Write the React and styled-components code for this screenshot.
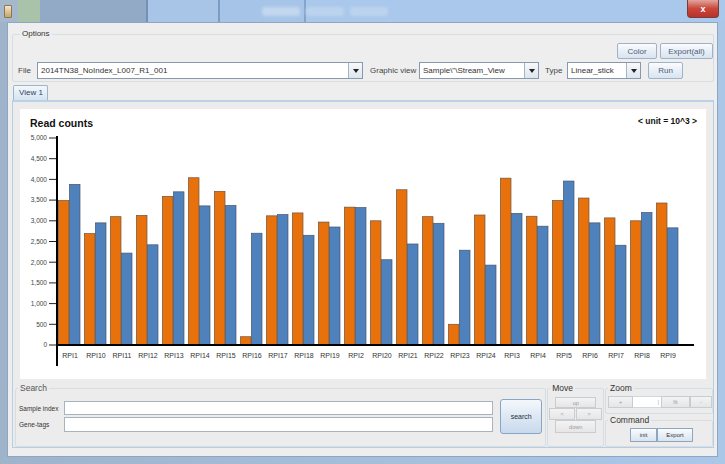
import React from 'react';
import styled, { createGlobalStyle } from 'styled-components';

const GlobalStyle = createGlobalStyle`
  html, body { margin: 0; padding: 0; }
  body {
    width: 725px;
    height: 464px;
    overflow: hidden;
    font-family: "Liberation Sans", Arial, sans-serif;
  }
`;

const Window = styled.div`
  width: 725px;
  height: 464px;
  box-sizing: border-box;
  display: flex;
  flex-direction: column;
  padding: 0 7px 7px 7px;
  background: linear-gradient(90deg, #9fb4cb 0%, #a3bcd8 40%, #abc7e8 100%);
`;

const TitleBar = styled.div`
  height: 22px;
  margin: 0 -7px;
  padding: 0 6px 0 4px;
  display: flex;
  align-items: center;
  justify-content: space-between;
  background: linear-gradient(90deg,
    #a5b8cc 0 18px, #a9c3aa 18px 40px, #93aac6 40px 146px,
    #7390b6 146px 148px, #a8c5e7 148px 218px, #7d9cc4 218px 220px,
    #a6c4e8 220px 304px, #86a4ca 304px 306px, #aac8ec 306px);
`;

const AppIcon = styled.div`
  width: 6px;
  height: 11px;
  border-radius: 1px;
  background: linear-gradient(#f3e7c9, #c9a46a);
  border: 1px solid #8d7653;
`;

const TitleBlobs = styled.div`
  flex: 1;
  display: flex;
  gap: 6px;
  padding-left: 250px;
`;

const Blob = styled.div`
  width: ${(p) => p.w}px;
  height: 9px;
  border-radius: 3px;
  background: ${(p) => p.c};
  filter: blur(1.5px);
`;

const CloseBtn = styled.div`
  width: 30px;
  height: 17px;
  margin-top: -4px;
  border-radius: 0 0 4px 4px;
  border: 1px solid #7a3a36;
  border-top: none;
  background: linear-gradient(#e2a59c, #c9473b 50%, #b8332a);
  color: #fff;
  font-size: 9px;
  font-weight: bold;
  display: flex;
  align-items: center;
  justify-content: center;
`;

const Client = styled.div`
  flex: 1;
  display: flex;
  flex-direction: column;
  padding: 6px 3px 0 4px;
  background: #eeeeee;
  border: 1px solid #8ea6c2;
  min-height: 0;
`;

const Group = styled.fieldset`
  margin: 0;
  padding: ${(p) => p.pad || '0'};
  border: 1px solid #d6dde3;
  border-radius: 2px;
  min-width: 0;
  box-sizing: border-box;
`;

const Legend = styled.legend`
  padding: 0 2px;
  margin-left: ${(p) => p.ml || 2}px;
  font-size: ${(p) => p.fs || 8}px;
  line-height: 10px;
  color: ${(p) => p.c || '#333'};
`;

const ButtonRow = styled.div`
  display: flex;
  justify-content: flex-end;
  gap: 3px;
  margin-top: 4px;
`;

const ControlRow = styled.div`
  display: flex;
  align-items: center;
  margin-top: 3px;
  height: 17px;
`;

const FieldLabel = styled.span`
  width: ${(p) => p.w}px;
  flex: none;
  font-size: 8px;
  color: #444;
`;

const Combo = styled.div`
  width: ${(p) => p.w}px;
  height: 17px;
  flex: none;
  box-sizing: border-box;
  display: flex;
  border: 1px solid #8899ad;
  background: #fff;
  margin-right: ${(p) => p.mr || 0}px;
`;

const ComboText = styled.span`
  flex: 1;
  padding-left: 3px;
  font-size: 8px;
  line-height: 15px;
  color: #333;
  white-space: nowrap;
  overflow: hidden;
`;

const ComboArrow = styled.span`
  width: 13px;
  border-left: 1px solid #a5b4c4;
  background: linear-gradient(#f7f9fc, #dde6ef);
  display: flex;
  align-items: center;
  justify-content: center;
  &::after {
    content: '';
    border-left: 3px solid transparent;
    border-right: 3px solid transparent;
    border-top: 4px solid #222;
  }
`;

const Btn = styled.button`
  width: ${(p) => p.w}px;
  height: ${(p) => p.h || 16}px;
  flex: none;
  padding: 0;
  box-sizing: border-box;
  border: 1px solid #9fb2c7;
  border-radius: 2px;
  background: linear-gradient(#fbfcfe, #e8eff7 50%, #d9e4f1);
  font-family: "Liberation Sans", Arial, sans-serif;
  font-size: 8px;
  color: #4d6078;
`;

const TabStrip = styled.div`
  display: flex;
  margin-top: 3px;
  padding-left: 1px;
`;

const Tab = styled.div`
  width: 35px;
  height: 15px;
  box-sizing: border-box;
  border: 1px solid #9db4cc;
  border-bottom: none;
  border-radius: 2px 2px 0 0;
  background: linear-gradient(#f2f7fc, #d6e4f2);
  font-size: 8px;
  color: #2f4460;
  padding-left: 5px;
  line-height: 14px;
`;

const TabPanel = styled.div`
  flex: 1;
  margin-bottom: 8px;
  display: flex;
  flex-direction: column;
  border: 1px solid #b8cde2;
  border-top: 2px solid #bcd0e6;
  background: #ececec;
  min-height: 0;
`;

const ChartBox = styled.div`
  height: 270px;
  margin: 7px 7px 0 7px;
  background: #fff;
  display: flex;
  flex-direction: column;
`;

const ChartHead = styled.div`
  height: 20px;
  padding: 4px 9px 0 10px;
  display: flex;
  align-items: center;
  justify-content: space-between;
`;

const ChartTitle = styled.span`
  font-size: 10.5px;
  font-weight: bold;
  color: #111;
`;

const UnitNote = styled.span`
  font-size: 8.5px;
  font-weight: bold;
  color: #111;
  margin-top: -4px;
`;

const Bottom = styled.div`
  flex: 1;
  display: flex;
  gap: 1px;
  padding: 4px 0 2px 2px;
`;

const SearchBody = styled.div`
  display: flex;
  align-items: center;
  gap: 7px;
  padding: 6px 3px 0 3px;
`;

const SearchRows = styled.div`
  flex: 1;
  display: grid;
  grid-template-columns: 45px 1fr;
  row-gap: 2px;
  align-items: center;
`;

const TinyLabel = styled.span`
  font-size: 6.5px;
  color: #333;
`;

const TextField = styled.div`
  height: ${(p) => p.h}px;
  box-sizing: border-box;
  border: 1px solid #a9b3bd;
  background: #fff;
`;

const SearchBtn = styled.button`
  width: 42px;
  height: 35px;
  padding: 0;
  border: 1px solid #88a5c6;
  border-radius: 3px;
  background: linear-gradient(#f4f8fc, #dde8f4 50%, #c9d9ec);
  font-family: "Liberation Sans", Arial, sans-serif;
  font-size: 7px;
  color: #1f2d40;
`;

const MoveGrid = styled.div`
  display: grid;
  grid-template-columns: 6px 20px 1px 20px 6px;
  grid-template-rows: 11px 12px 12px;
  padding: 4px 0 0 1px;
`;

const SmallBtn = styled.div`
  grid-column: ${(p) => p.col || 'auto'};
  grid-row: ${(p) => p.row || 'auto'};
  width: ${(p) => (p.w ? `${p.w}px` : 'auto')};
  height: ${(p) => p.h || 12}px;
  box-sizing: border-box;
  border: 1px solid #c9cdd2;
  background: linear-gradient(#f3f3f3, #e6e6e6);
  font-size: 5.5px;
  color: #9a9a9a;
  display: flex;
  align-items: center;
  justify-content: center;
`;

const SideColumn = styled.div`
  width: 108px;
  display: flex;
  flex-direction: column;
  gap: 1px;
`;

const ZoomRow = styled.div`
  display: flex;
  padding: 3px 0 0 2px;
`;

const ZoomField = styled.div`
  width: 28px;
  height: 12px;
  box-sizing: border-box;
  border-top: 1px solid #d3d7db;
  border-bottom: 1px solid #d3d7db;
  background: #fff;
  font-size: 5px;
  color: #999;
  text-align: right;
  padding-right: 2px;
  line-height: 10px;
`;

const CommandRow = styled.div`
  display: flex;
  padding: 3px 0 0 24px;
`;

const CmdBtn = styled(Btn)`
  height: 14px;
  border-radius: 0;
  font-size: 6px;
  color: #333;
  border-color: #8fa6bf;
`;

const DATA = [
  ['RPI1', 3490, 3880], ['RPI10', 2690, 2950], ['RPI11', 3100, 2220], ['RPI12', 3130, 2420],
  ['RPI13', 3590, 3700], ['RPI14', 4040, 3360], ['RPI15', 3710, 3370], ['RPI16', 200, 2700],
  ['RPI17', 3120, 3150], ['RPI18', 3190, 2650], ['RPI19', 2970, 2850], ['RPI2', 3330, 3320],
  ['RPI20', 3000, 2060], ['RPI21', 3750, 2440], ['RPI22', 3100, 2940], ['RPI23', 500, 2290],
  ['RPI24', 3140, 1930], ['RPI3', 4030, 3180], ['RPI4', 3110, 2870], ['RPI5', 3490, 3960],
  ['RPI6', 3550, 2950], ['RPI7', 3070, 2410], ['RPI8', 3000, 3200], ['RPI9', 3430, 2830],
];

const Y0 = 212;
const SCALE = 207 / 5000;
const yOf = (v) => Y0 - v * SCALE;

const BarChart = () => (
  <svg width="686" height="246" viewBox="0 0 686 246">
    {Array.from({ length: 11 }, (_, i) => i * 500).map((v) => (
      <g key={v}>
        <line x1="29" x2="37" y1={yOf(v)} y2={yOf(v)} stroke="#222" strokeWidth="1" />
        <text x="27" y={yOf(v) + 2.3} fontSize="6.5" fill="#444" textAnchor="end"
          fontFamily="Liberation Sans, Arial, sans-serif">
          {v.toLocaleString('en-US')}
        </text>
      </g>
    ))}
    {DATA.map(([name, a, b], i) => {
      const x = 38 + i * 26;
      return (
        <g key={name}>
          <rect x={x + 0.4} y={yOf(a)} width="10.6" height={Y0 - yOf(a)} fill="#e8710c" stroke="#6e5440" strokeWidth="0.7" />
          <rect x={x + 11.4} y={yOf(b)} width="10.6" height={Y0 - yOf(b)} fill="#4f81bd" stroke="#47566a" strokeWidth="0.7" />
          <text x={x + 12} y="224.5" fontSize="7" fill="#333" textAnchor="middle"
            fontFamily="Liberation Sans, Arial, sans-serif">
            {name}
          </text>
        </g>
      );
    })}
    <line x1="37" x2="37" y1="3" y2="233" stroke="#000" strokeWidth="2" />
    <line x1="36" x2="674" y1={Y0} y2={Y0} stroke="#000" strokeWidth="2" />
  </svg>
);

const App = () => (
  <>
    <GlobalStyle />
    <Window>
      <TitleBar>
        <AppIcon />
        <TitleBlobs>
          <Blob w={38} c="#c3d7ee" />
          <Blob w={38} c="#bcd3ee" />
          <Blob w={38} c="#bcd3ee" />
        </TitleBlobs>
        <CloseBtn>x</CloseBtn>
      </TitleBar>

      <Client>
        <Group pad="0 0 2px 5px">
          <Legend>Options</Legend>
          <ButtonRow>
            <Btn w={40}>Color</Btn>
            <Btn w={53}>Export(all)</Btn>
          </ButtonRow>
          <ControlRow>
            <FieldLabel w={19}>File</FieldLabel>
            <Combo w={326} mr={7}>
              <ComboText>2014TN38_NoIndex_L007_R1_001</ComboText>
              <ComboArrow />
            </Combo>
            <FieldLabel w={49}>Graphic view</FieldLabel>
            <Combo w={120} mr={6}>
              <ComboText>Sample\"\Stream_View</ComboText>
              <ComboArrow />
            </Combo>
            <FieldLabel w={22}>Type</FieldLabel>
            <Combo w={74} mr={7}>
              <ComboText>Linear_stick</ComboText>
              <ComboArrow />
            </Combo>
            <Btn w={35} h={17}>Run</Btn>
          </ControlRow>
        </Group>

        <TabStrip>
          <Tab>View 1</Tab>
        </TabStrip>

        <TabPanel>
          <ChartBox>
            <ChartHead>
              <ChartTitle>Read counts</ChartTitle>
              <UnitNote>&lt; unit = 10^3 &gt;</UnitNote>
            </ChartHead>
            <BarChart />
          </ChartBox>

          <Bottom>
            <Group pad="0" style={{ width: 533 }}>
              <Legend fs={8.5} c="#555">Search</Legend>
              <SearchBody>
                <SearchRows>
                  <TinyLabel>Sample index</TinyLabel>
                  <TextField h={14} />
                  <TinyLabel>Gene-tags</TinyLabel>
                  <TextField h={15} />
                </SearchRows>
                <SearchBtn>search</SearchBtn>
              </SearchBody>
            </Group>

            <Group pad="0" style={{ width: 57 }}>
              <Legend fs={8.5} ml={0}>Move</Legend>
              <MoveGrid>
                <SmallBtn col="2 / 5" row="1" h={11}>up</SmallBtn>
                <SmallBtn col="1 / 3" row="2">&lt;</SmallBtn>
                <SmallBtn col="4 / 6" row="2">&gt;</SmallBtn>
                <SmallBtn col="2 / 5" row="3" h={13}>down</SmallBtn>
              </MoveGrid>
            </Group>

            <SideColumn>
              <Group pad="0 0 5px 0">
                <Legend fs={8.5}>Zoom</Legend>
                <ZoomRow>
                  <SmallBtn w={25}>+</SmallBtn>
                  <ZoomField>|</ZoomField>
                  <SmallBtn w={29}>fit</SmallBtn>
                  <SmallBtn w={22}>-</SmallBtn>
                </ZoomRow>
              </Group>
              <Group pad="0 0 4px 0" style={{ flex: 1 }}>
                <Legend fs={8.5}>Command</Legend>
                <CommandRow>
                  <CmdBtn w={27}>init</CmdBtn>
                  <CmdBtn w={36}>Export</CmdBtn>
                </CommandRow>
              </Group>
            </SideColumn>
          </Bottom>
        </TabPanel>
      </Client>
    </Window>
  </>
);

export default App;
